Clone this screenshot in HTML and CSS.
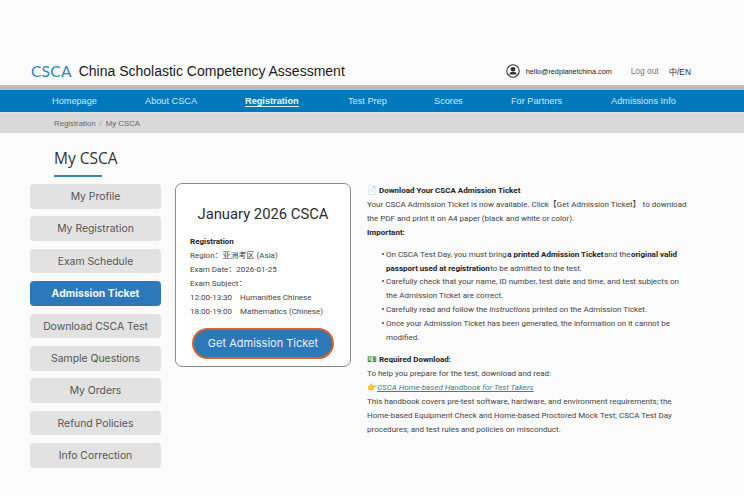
FILE: index.html
```html
<!DOCTYPE html>
<html lang="en">
<head>
    <meta charset="UTF-8">
    <meta name="viewport" content="width=device-width, initial-scale=1.0">
    <title>My CSCA</title>
    <link rel="stylesheet" href="styles.css">
</head>
<body>
    <header class="header">
        <div class="brand">
            <span class="logo">CSCA</span>
            <span class="site-name">China Scholastic Competency Assessment</span>
        </div>
        <div class="account">
            <svg class="user-icon" viewBox="0 0 14 14" width="14" height="14">
                <circle cx="7" cy="7" r="6.2" fill="none" stroke="#333" stroke-width="1.1"/>
                <circle cx="7" cy="5.2" r="2.3" fill="#333"/>
                <path d="M3.2 10.6c0-1.9 1.7-2.9 3.8-2.9s3.800 1 3.800 2.900z" fill="#333"/>
            </svg>
            <span class="email">hello@redplanetchina.com</span>
            <a class="logout" href="#">Log out</a>
            <span class="lang">中/EN</span>
        </div>
    </header>

    <nav class="nav">
        <a href="#">Homepage</a>
        <a href="#">About CSCA</a>
        <a href="#" class="active">Registration</a>
        <a href="#">Test Prep</a>
        <a href="#">Scores</a>
        <a href="#">For Partners</a>
        <a href="#">Admissions Info</a>
    </nav>

    <div class="breadcrumb">
        <span>Registration</span>
        <span class="sep">/</span>
        <span>My CSCA</span>
    </div>

    <main class="main">
        <h1 class="page-title">My CSCA</h1>
        <div class="columns">
            <aside class="sidebar">
                <a href="#" class="side-btn">My Profile</a>
                <a href="#" class="side-btn">My Registration</a>
                <a href="#" class="side-btn">Exam Schedule</a>
                <a href="#" class="side-btn active">Admission Ticket</a>
                <a href="#" class="side-btn">Download CSCA Test</a>
                <a href="#" class="side-btn">Sample Questions</a>
                <a href="#" class="side-btn">My Orders</a>
                <a href="#" class="side-btn">Refund Policies</a>
                <a href="#" class="side-btn">Info Correction</a>
            </aside>

            <section class="card">
                <h2 class="card-title">January 2026 CSCA</h2>
                <div class="card-info">
                    <p><strong>Registration</strong></p>
                    <p>Region：亚洲考区 (Asia)</p>
                    <p>Exam Date：2026-01-25</p>
                    <p>Exam Subject：</p>
                    <p class="slot"><span>12:00-13:30</span><span>Humanities Chinese</span></p>
                    <p class="slot"><span>18:00-19:00</span><span>Mathematics (Chinese)</span></p>
                </div>
                <a href="#" class="ticket-btn">Get Admission Ticket</a>
            </section>

            <section class="notes">
                <p><span class="emoji">📄</span> <strong>Download Your CSCA Admission Ticket</strong></p>
                <p>Your CSCA Admission Ticket is now available. Click【Get Admission Ticket】 to download the PDF and print it on A4 paper (black and white or color).</p>
                <p><strong>Important:</strong></p>
                <ul>
                    <li>On CSCA Test Day, you must bring<strong>a printed Admission Ticket</strong>and the<strong>original valid passport used at registration</strong>to be admitted to the test.</li>
                    <li>Carefully check that your name, ID number, test date and time, and test subjects on the Admission Ticket are correct.</li>
                    <li>Carefully read and follow the <em>Instructions</em> printed on the Admission Ticket.</li>
                    <li>Once your Admission Ticket has been generated, the information on it cannot be modified.</li>
                </ul>
                <p><span class="emoji">💵</span> <strong>Required Download:</strong></p>
                <p>To help you prepare for the test, download and read:</p>
                <p><span class="emoji">👉</span><a href="#" class="handbook">CSCA Home-based Handbook for Test Takers</a></p>
                <p>This handbook covers pre-test software, hardware, and environment requirements; the Home-based Equipment Check and Home-based Proctored Mock Test; CSCA Test Day procedures; and test rules and policies on misconduct.</p>
            </section>
        </div>
    </main>
</body>
</html>
```

FILE: styles.css
```css
* {
    box-sizing: border-box;
}

body {
    margin: 0;
    background-color: #fbfbfb;
    font-family: "Liberation Sans", Arial, sans-serif;
    color: #333;
    height: 496px;
    overflow: hidden;
}

a {
    text-decoration: none;
    color: inherit;
}

p {
    margin: 0;
}

.header {
    height: 85px;
    padding: 0 53px 0 31px;
    display: flex;
    align-items: flex-end;
    justify-content: space-between;
}

.brand {
    display: flex;
    align-items: center;
    gap: 7px;
    padding-bottom: 5px;
}

.logo {
    color: #2a86bd;
    font-family: Lato, sans-serif;
    font-size: 15.6px;
    letter-spacing: 0.2px;
}

.site-name {
    color: #1c1c1c;
    font-size: 14px;
}

.account {
    display: flex;
    align-items: center;
    padding-bottom: 7px;
}

.user-icon {
    margin-right: 6px;
}

.email {
    color: #222;
    font-size: 7.25px;
    margin-right: 19px;
}

.logout {
    color: #777;
    font-size: 8.4px;
    margin-right: 10px;
}

.lang {
    color: #333;
    font-size: 8.4px;
    font-family: "Liberation Sans", "Noto Sans CJK SC", sans-serif;
}

.nav {
    height: 28px;
    border-top: 5px solid #bcbcbc;
    border-bottom: 1px solid #e0e0e0;
    background-color: #0279bd;
    display: grid;
    grid-template-columns: 93px 100px 103px 86px 77px 100px auto;
    padding-left: 52px;
    align-items: center;
    font-size: 9.2px;
}

.nav a {
    color: #cfe8f7;
}

.nav a.active {
    color: #eef7fc;
    font-weight: bold;
    justify-self: start;
    border-bottom: 1px solid #dcecf6;
    line-height: 10px;
}

.breadcrumb {
    height: 20px;
    background-color: #d9d9d9;
    padding-left: 54px;
    display: flex;
    align-items: center;
    gap: 4px;
    font-size: 7.8px;
    color: #666;
}

.breadcrumb .sep {
    color: #999;
}

.main {
    padding: 0 0 0 30px;
}

.page-title {
    display: inline-block;
    margin: 15px 0 0 24px;
    padding-bottom: 8px;
    position: relative;
    font-family: "Open Sans", sans-serif;
    font-size: 15.5px;
    line-height: 21px;
    font-weight: 400;
    color: #333;
}

.page-title::after {
    content: "";
    position: absolute;
    left: 0;
    bottom: 0;
    width: 48px;
    height: 2px;
    background-color: #3d85ad;
}

.columns {
    display: flex;
    align-items: flex-start;
    margin-top: 6px;
}

.sidebar {
    width: 131px;
    display: flex;
    flex-direction: column;
    gap: 7.8px;
    margin-top: 1px;
}

.side-btn {
    height: 24.6px;
    line-height: 25px;
    border-radius: 4px;
    background-color: #e2e2e2;
    text-align: center;
    color: #555;
    font-family: Inter, sans-serif;
    font-size: 10.4px;
}

.side-btn.active {
    background-color: #2c78b8;
    color: #f2f7fb;
    font-weight: bold;
}

.card {
    width: 176px;
    height: 184px;
    margin-left: 14px;
    padding: 20px 0 0 14px;
    background-color: #fff;
    border: 1px solid #8a8a8a;
    border-radius: 7px;
}

.card-title {
    margin: 0;
    padding-right: 14px;
    text-align: center;
    font-family: Roboto, sans-serif;
    font-size: 14.8px;
    line-height: 20px;
    font-weight: 400;
    color: #2c2c2c;
}

.card-info {
    margin-top: 11px;
    font-family: Roboto, "Noto Sans CJK SC", sans-serif;
    font-size: 8px;
    line-height: 13.9px;
    color: #444;
}

.card-info strong {
    color: #222;
}

.slot {
    display: flex;
    gap: 8px;
}

.ticket-btn {
    display: block;
    width: 142px;
    height: 31px;
    margin: 10px 0 0 2px;
    border: 2px solid #dd5f2c;
    border-radius: 16px;
    background-color: #2c78b8;
    color: #e9f2f9;
    font-family: Inter, sans-serif;
    font-size: 11px;
    line-height: 27px;
    text-align: center;
}

.notes {
    width: 322px;
    margin: 1px 0 0 16px;
    font-family: Roboto, "Noto Sans CJK SC", sans-serif;
    font-size: 8px;
    line-height: 13.9px;
    color: #444;
}

.notes strong {
    color: #222;
}

.notes li strong {
    margin: 0 0.4px;
}

.notes ul {
    margin: 8px 0;
    padding-left: 19px;
    list-style: none;
}

.notes li::before {
    content: "";
    display: inline-block;
    width: 2px;
    height: 2px;
    margin: 0 2px 2px -4px;
    border-radius: 50%;
    background-color: #444;
}

.emoji {
    font-family: "DejaVu Sans", sans-serif;
    color: #888;
}

.handbook {
    color: #3d8088;
    font-style: italic;
    text-decoration: underline;
}
```
